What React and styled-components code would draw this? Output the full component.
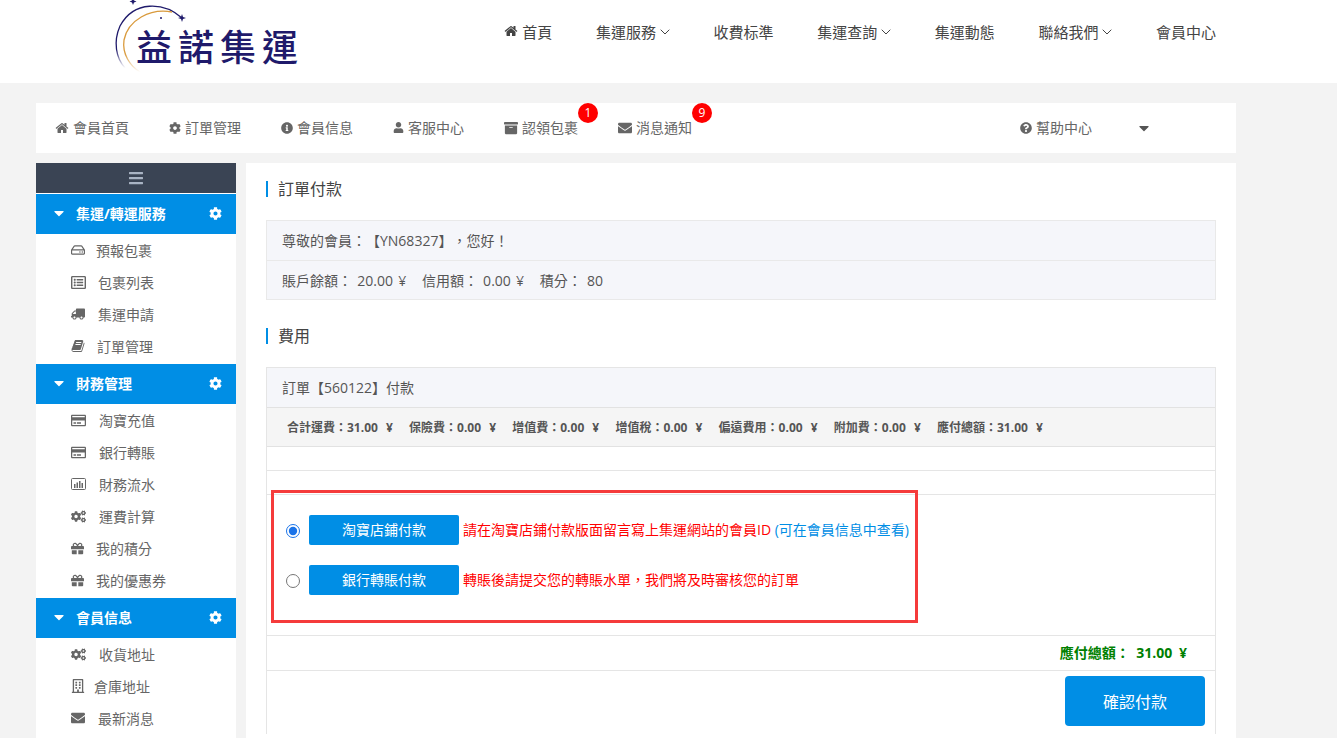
import styled, { createGlobalStyle } from "styled-components";
import {
  FaCog,
  FaInfoCircle,
  FaUser,
  FaArchive,
  FaEnvelope,
  FaQuestionCircle,
  FaCaretDown,
  FaBars,
  FaRegHdd,
  FaRegListAlt,
  FaTruck,
  FaRegCreditCard,
  FaCogs,
  FaGift,
  FaRegBuilding,
} from "react-icons/fa";

const Global = createGlobalStyle`
  html, body {
    margin: 0;
    padding: 0;
    height: 100%;
    overflow: hidden;
    background: #f3f3f3;
  }
  body {
    font-family: "Open Sans", "Noto Sans CJK TC", sans-serif;
    font-size: 14px;
    color: #666;
    text-spacing-trim: space-all;
    font-feature-settings: "palt" 0;
  }
  * { box-sizing: border-box; }
`;

const HomeIcon = ({ size = 14 }) => (
  <svg width={size} height={size} viewBox="0 0 1792 1792" fill="currentColor">
    <path d="M1472 992v480q0 26-19 45t-45 19h-384v-384h-256v384h-384q-26 0-45-19t-19-45v-480q0-1 .5-3t.5-3l575-474 575 474q1 2 1 6zm223-69l-62 74q-8 9-21 11h-3q-13 0-21-7l-692-577-692 577q-12 8-24 7-13-2-21-11l-62-74q-8-10-7-23.500t11-21.500l719-599q32-26 76-26t76 26l244 204v-195q0-14 9-23t23-9h192q14 0 23 9t9 23v408l219 182q10 8 11 21.500t-7 23.500z" />
  </svg>
);

const BookIcon = ({ size = 14 }) => (
  <svg width={size} height={size} viewBox="0 0 1792 1792" fill="currentColor">
    <path d="M1703 478q40 57 18 129l-275 906q-19 64-76.500 107.500t-122.500 43.500h-923q-77 0-148.500-53.500t-99.500-131.500q-24-67-2-127 0-4 3-27t4-37q1-8-3-21.500t-3-19.500q2-11 8-21t16.500-23.500 16.500-23.500q23-38 45-91.500t30-91.500q3-10 .5-30t-.5-28q3-11 17-28t17-23q21-36 42-92t25-90q1-9-2.500-32t.5-28q4-13 22-30.500t22-22.500q19-26 42.500-84.500t27.500-96.500q1-8-3-25.500t-2-26.500q2-8 9-18t18-23 17-21q8-12 16.500-30.500t15-35 16-36 19.500-32 26.500-23.500 36-11.500 47.500 5.500l-1 3q38-9 51-9h761q74 0 114 56t18 130l-274 906q-36 119-71.500 153.500t-128.500 34.500h-869q-27 0-38 15-11 16-1 43 24 70 144 70h923q29 0 56-15.500t35-41.500l300-987q7-22 5-57 38 15 59 43zm-1064 2q-4 13 2 22.500t20 9.500h608q13 0 25.500-9.500t16.500-22.500l21-64q4-13-2-22.500t-20-9.500h-608q-13 0-25.500 9.500t-16.500 22.500zm-83 256q-4 13 2 22.500t20 9.500h608q13 0 25.500-9.500t16.500-22.500l21-64q4-13-2-22.500t-20-9.500h-608q-13 0-25.500 9.500t-16.500 22.500z" />
  </svg>
);

const BarBoxIcon = ({ size = 15 }) => (
  <svg width={size} height={size * 0.8} viewBox="0 0 15 12" fill="none">
    <rect x="0.5" y="0.5" width="14" height="11" rx="1" stroke="currentColor" />
    <path d="M3 6h1.500v4H3zM5.500 4.500H7V10H5.500zM8 3h1.500v7H8zM10.500 5H12v5h-1.500z" fill="currentColor" />
  </svg>
);

const ChevronMark = styled.svg`
  margin-top: 2px;
`;

const Chevron = () => (
  <ChevronMark width="10" height="6" viewBox="0 0 10 6" fill="none">
    <path d="M.7 .7L5 5l4.300-4.300" stroke="currentColor" strokeWidth="1" />
  </ChevronMark>
);

const FlippedTruckMark = styled(FaTruck)`
  transform: scaleX(-1);
`;

const FlippedTruck = ({ size }) => <FlippedTruckMark size={size} />;

const Header = styled.header`
  height: 83px;
  background: #fff;
  display: flex;
  justify-content: space-between;
  align-items: center;
  padding: 0 121px 19px 114px;
`;

const Logo = styled.div`
  position: relative;
  align-self: flex-start;
  width: 186px;
  height: 76px;
  svg {
    position: absolute;
    left: 0;
    top: 0;
    overflow: visible;
  }
`;

const LogoText = styled.span`
  position: absolute;
  left: 22px;
  top: 23px;
  font-family: "Noto Sans CJK TC", sans-serif;
  font-weight: 500;
  font-size: 36px;
  line-height: 44px;
  letter-spacing: 6px;
  white-space: nowrap;
  color: #1f1a6b;
`;

const MainNav = styled.nav`
  display: flex;
  align-items: center;
  gap: 43.6px;
  font-size: 15px;
  color: #444;
  margin-top: -2px;
`;

const MainNavItem = styled.a`
  display: flex;
  align-items: center;
  gap: 4px;
  svg {
    flex: none;
  }
`;

const Page = styled.div`
  padding: 20px 101px 0 36px;
`;

const TopBar = styled.div`
  height: 50px;
  background: #fff;
  display: flex;
  align-items: center;
  padding: 0 84px 1px 19px;
  font-size: 14px;
  color: #666;
`;

const TopItem = styled.a`
  position: relative;
  display: flex;
  align-items: center;
  gap: 4px;
  margin-right: ${(p) => (p.$last ? 0 : 40)}px;
  line-height: 20px;
`;

const Badge = styled.span`
  position: absolute;
  right: -20px;
  top: -15px;
  width: 20px;
  height: 20px;
  border-radius: 50%;
  background: #f00;
  color: #fff;
  font-size: 12px;
  line-height: 20px;
  text-align: center;
`;

const HelpGroup = styled.div`
  margin-left: auto;
  display: flex;
  align-items: center;
  gap: 44px;
  svg.caret {
    color: #555;
  }
`;

const Columns = styled.div`
  display: flex;
  align-items: flex-start;
  gap: 10px;
  margin-top: 10px;
`;

const Sidebar = styled.aside`
  width: 200px;
  flex: none;
  background: #fff;
  padding-bottom: 30px;
`;

const SideToggle = styled.div`
  height: 30px;
  background: #3a4454;
  color: #a9b4c4;
  display: flex;
  align-items: center;
  justify-content: center;
  margin-bottom: 1px;
`;

const GroupHead = styled.div`
  height: 40px;
  background: #008ee5;
  color: #fff;
  font-size: 14px;
  font-weight: 700;
  display: flex;
  align-items: center;
  padding: 0 14px 2px 15px;
  span {
    margin-left: 9px;
    flex: 1;
  }
`;

const GroupList = styled.div`
  padding: 1px 0;
`;

const SideItem = styled.a`
  height: 32px;
  display: flex;
  align-items: center;
  padding: 0 0 2px 35px;
  font-size: 14px;
  color: #666;
  span {
    margin-left: ${(p) => p.$gap}px;
  }
`;

const Content = styled.main`
  flex: 1;
  height: 640px;
  background: #fff;
  padding: 0 20px;
`;

const SectionTitle = styled.h3`
  margin: 0;
  font-weight: 400;
  font-size: 16px;
  line-height: 16px;
  color: #444;
  border-left: 2px solid #008ee5;
  padding-left: 10px;
`;

const TitleWrap = styled.div`
  padding: ${(p) => p.$top}px 0 ${(p) => p.$bottom}px;
`;

const InfoPanel = styled.div`
  border: 1px solid #e9e9e9;
  background: #f5f6fa;
`;

const InfoRow = styled.div`
  height: 39px;
  display: flex;
  align-items: center;
  padding: 0 15px 2px;
  font-size: 14px;
  color: #555;
  white-space: pre;
  word-spacing: 1.6px;
  & + & {
    border-top: 1px solid #e9e9e9;
    padding-bottom: 0;
  }
`;

const FeePanel = styled.div`
  border: 1px solid #e5e5e5;
  border-bottom: none;
`;

const FeeTitle = styled.div`
  height: 39px;
  background: #f5f6fa;
  display: flex;
  align-items: center;
  padding: 0 15px 2px;
  font-size: 14px;
  color: #555;
`;

const FeeRow = styled.div`
  height: 40px;
  background: #f5f5f5;
  border-top: 1px solid #e2e2e2;
  border-bottom: 1px solid #e2e2e2;
  display: flex;
  align-items: center;
  gap: 16.2px;
  padding: 0 20px;
  font-size: 12px;
  font-weight: 700;
  word-spacing: 5px;
  color: #555;
`;

const EmptyRow = styled.div`
  height: 24px;
  border-bottom: 1px solid #e5e5e5;
`;

const PayArea = styled.div`
  position: relative;
  height: 141px;
  border-bottom: 1px solid #e5e5e5;
  padding: 20px 0 0 19px;
  display: flex;
  flex-direction: column;
  gap: 20px;
`;

const Highlight = styled.div`
  position: absolute;
  left: 4px;
  top: -5px;
  width: 647px;
  height: 133px;
  border: 3px solid #f53b3b;
  pointer-events: none;
`;

const PayRow = styled.label`
  display: flex;
  align-items: center;
  height: 30px;
  font-size: 14px;
  color: #f00;
  input {
    width: 14px;
    height: 14px;
    margin: 2px 9px 0 0;
    accent-color: #1a73e8;
  }
`;

const PayNote = styled.span`
  margin-top: -2px;
`;

const PayButton = styled.button`
  width: 150px;
  height: 30px;
  border: none;
  border-radius: 2px;
  background: #008ee5;
  color: #fff;
  font-family: inherit;
  font-size: 14px;
  margin-right: 4px;
  padding: 0 0 2px;
`;

const Hint = styled.span`
  color: #008ee5;
`;

const TotalRow = styled.div`
  height: 35px;
  border-bottom: 1px solid #e5e5e5;
  display: flex;
  align-items: center;
  justify-content: flex-end;
  padding: 0 28px 2px 0;
  font-size: 14px;
  font-weight: 700;
  color: #008000;
  white-space: pre;
  word-spacing: 3px;
`;

const ConfirmRow = styled.div`
  height: 63px;
  display: flex;
  justify-content: flex-end;
  padding: 5px 10px 0 0;
`;

const ConfirmButton = styled.button`
  width: 140px;
  height: 50px;
  border: none;
  border-radius: 4px;
  background: #008ee5;
  color: #fff;
  font-family: inherit;
  font-size: 16px;
`;

const mainNav = [
  { label: "首頁", home: true },
  { label: "集運服務", more: true },
  { label: "收費标準" },
  { label: "集運查詢", more: true },
  { label: "集運動態" },
  { label: "聯絡我們", more: true },
  { label: "會員中心" },
];

const topNav = [
  { label: "會員首頁", icon: <HomeIcon size={14} /> },
  { label: "訂單管理", icon: <FaCog size={12} /> },
  { label: "會員信息", icon: <FaInfoCircle size={12} /> },
  { label: "客服中心", icon: <FaUser size={11} /> },
  { label: "認領包裹", icon: <FaArchive size={14} />, badge: 1 },
  { label: "消息通知", icon: <FaEnvelope size={14} />, badge: 9 },
];

const groups = [
  {
    title: "集運/轉運服務",
    items: [
      { label: "預報包裹", Icon: FaRegHdd, size: 14, gap: 11 },
      { label: "包裹列表", Icon: FaRegListAlt, size: 15, gap: 12 },
      { label: "集運申請", Icon: FlippedTruck, size: 14, gap: 13 },
      { label: "訂單管理", Icon: BookIcon, size: 14, gap: 12 },
    ],
  },
  {
    title: "財務管理",
    items: [
      { label: "淘寶充值", Icon: FaRegCreditCard, size: 15, gap: 13 },
      { label: "銀行轉賬", Icon: FaRegCreditCard, size: 15, gap: 13 },
      { label: "財務流水", Icon: BarBoxIcon, size: 15, gap: 13 },
      { label: "運費計算", Icon: FaCogs, size: 15, gap: 13 },
      { label: "我的積分", Icon: FaGift, size: 13, gap: 12 },
      { label: "我的優惠券", Icon: FaGift, size: 13, gap: 12 },
    ],
  },
  {
    title: "會員信息",
    items: [
      { label: "收貨地址", Icon: FaCogs, size: 15, gap: 13 },
      { label: "倉庫地址", Icon: FaRegBuilding, size: 14, gap: 9 },
      { label: "最新消息", Icon: FaEnvelope, size: 14, gap: 13 },
    ],
  },
];

const fees = [
  "合計運費：31.00 ¥",
  "保險費：0.00 ¥",
  "增值費：0.00 ¥",
  "增值稅：0.00 ¥",
  "偏遠費用：0.00 ¥",
  "附加費：0.00 ¥",
  "應付總額：31.00 ¥",
];

const App = () => {
  return (
    <>
      <Global />
      <Header>
        <Logo>
          <svg width="186" height="76" viewBox="0 0 186 76" fill="none">
            <defs>
              <linearGradient id="navyFade" x1="0" y1="0" x2="0" y2="1">
                <stop offset="0.7" stopColor="#1f1a6b" />
                <stop offset="1" stopColor="#1f1a6b" stopOpacity="0" />
              </linearGradient>
              <linearGradient id="goldFade" x1="0" y1="0" x2="0" y2="1">
                <stop offset="0.7" stopColor="#d99a3c" />
                <stop offset="1" stopColor="#d99a3c" stopOpacity="0" />
              </linearGradient>
            </defs>
            <path d="M68 18 C50 2 20 0 6 26 C-1 42 2 58 11 68" stroke="url(#navyFade)" strokeWidth="1.300" />
            <path d="M58 12 C36 8 14 20 10 40 C8 54 16 66 26 72" stroke="url(#goldFade)" strokeWidth="1.300" />
            <path d="M68 14 l1 3 3 1 -3 1 -1 3 -1 -3 -3 -1 3 -1z" fill="#1f1a6b" />
            <path d="M19 -2 l1 2.500 2.500 1 -2.500 1 -1 2.500 -1 -2.500 -2.500 -1 2.500 -1z" fill="#1f1a6b" />
            <circle cx="47" cy="18" r="1" fill="#1f1a6b" />
          </svg>
          <LogoText>益諾集運</LogoText>
        </Logo>
        <MainNav>
          {mainNav.map((item) => (
            <MainNavItem key={item.label}>
              {item.home && <HomeIcon size={14} />}
              {item.label}
              {item.more && <Chevron />}
            </MainNavItem>
          ))}
        </MainNav>
      </Header>
      <Page>
        <TopBar>
          {topNav.map((item) => (
            <TopItem key={item.label}>
              {item.icon}
              {item.label}
              {item.badge && <Badge>{item.badge}</Badge>}
            </TopItem>
          ))}
          <HelpGroup>
            <TopItem as="div" $last>
              <FaQuestionCircle size={12} />
              幫助中心
            </TopItem>
            <FaCaretDown className="caret" size={16} />
          </HelpGroup>
        </TopBar>
        <Columns>
          <Sidebar>
            <SideToggle>
              <FaBars size={16} />
            </SideToggle>
            {groups.map((group) => (
              <div key={group.title}>
                <GroupHead>
                  <FaCaretDown size={16} />
                  <span>{group.title}</span>
                  <FaCog size={13} />
                </GroupHead>
                <GroupList>
                  {group.items.map(({ label, Icon, size, gap }) => (
                    <SideItem key={label} $gap={gap}>
                      <Icon size={size} />
                      <span>{label}</span>
                    </SideItem>
                  ))}
                </GroupList>
              </div>
            ))}
          </Sidebar>
          <Content>
            <TitleWrap $top={18} $bottom={23}>
              <SectionTitle>訂單付款</SectionTitle>
            </TitleWrap>
            <InfoPanel>
              <InfoRow>尊敬的會員：【YN68327】，您好！</InfoRow>
              <InfoRow>賬戶餘額： 20.00 ¥   信用額： 0.00 ¥   積分： 80</InfoRow>
            </InfoPanel>
            <TitleWrap $top={28} $bottom={23}>
              <SectionTitle>費用</SectionTitle>
            </TitleWrap>
            <FeePanel>
              <FeeTitle>訂單【560122】付款</FeeTitle>
              <FeeRow>
                {fees.map((fee) => (
                  <span key={fee}>{fee}</span>
                ))}
              </FeeRow>
              <EmptyRow />
              <EmptyRow />
              <PayArea>
                <PayRow>
                  <input type="radio" name="pay" defaultChecked />
                  <PayButton type="button">淘寶店鋪付款</PayButton>
                  <PayNote>
                    請在淘寶店鋪付款版面留言寫上集運網站的會員ID <Hint>(可在會員信息中查看)</Hint>
                  </PayNote>
                </PayRow>
                <PayRow>
                  <input type="radio" name="pay" />
                  <PayButton type="button">銀行轉賬付款</PayButton>
                  <PayNote>轉賬後請提交您的轉賬水單，我們將及時審核您的訂單</PayNote>
                </PayRow>
                <Highlight />
              </PayArea>
              <TotalRow>應付總額： 31.00 ¥</TotalRow>
              <ConfirmRow>
                <ConfirmButton type="button">確認付款</ConfirmButton>
              </ConfirmRow>
            </FeePanel>
          </Content>
        </Columns>
      </Page>
    </>
  );
};

export default App;
